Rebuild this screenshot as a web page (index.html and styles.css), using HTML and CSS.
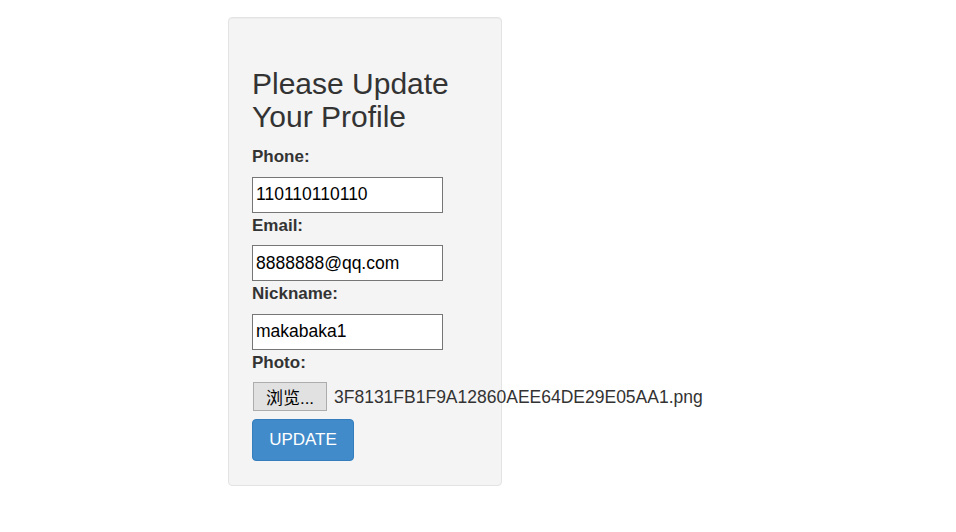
FILE: index.html
```html
<!DOCTYPE html>
<html>
<head>
    <meta charset="UTF-8">
    <meta name="viewport" content="width=device-width, initial-scale=1.0">
    <title>Update Profile</title>
    <link rel="stylesheet" href="styles.css">
</head>
<body>
    <div class="page">
        <form class="well" onsubmit="return false">
            <h2>Please Update Your Profile</h2>
            <label for="phone">Phone:</label>
            <input type="text" id="phone" value="110110110110">
            <label for="email">Email:</label>
            <input type="text" id="email" value="8888888@qq.com">
            <label for="nickname">Nickname:</label>
            <input type="text" id="nickname" value="makabaka1">
            <label>Photo:</label>
            <div class="file-row">
                <span class="file-btn">浏览...</span>
                <span class="file-name">3F8131FB1F9A12860AEE64DE29E05AA1.png</span>
            </div>
            <button class="btn-update" type="submit">UPDATE</button>
        </form>
    </div>
</body>
</html>
```

FILE: styles.css
```css
body {
    margin: 0;
    padding: 0;
    background-color: #fff;
    font-family: "Liberation Sans", Arial, "Noto Sans CJK SC", sans-serif;
    color: #333;
}
.page {
    padding: 17px 0 0 228px;
}
.well {
    width: 226px;
    padding: 23px 23px 24px;
    background-color: #f4f4f4;
    border: 1px solid #e3e3e3;
    border-radius: 4px;
    box-shadow: inset 0 1px 1px rgba(0,0,0,0.03);
}
.well h2 {
    margin: 26px 0 11px;
    font-size: 30px;
    font-weight: normal;
    line-height: 33px;
}
.well label {
    display: block;
    font-size: 17px;
    font-weight: bold;
    line-height: 25.5px;
    margin-bottom: 7px;
}
.well input {
    display: block;
    box-sizing: border-box;
    width: 191px;
    height: 36px;
    margin: 0;
    padding: 0 3px;
    border: 1px solid #767676;
    background: #fff;
    font-family: "Liberation Sans", Arial, sans-serif;
    font-size: 17.5px;
    color: #000;
}
.file-row {
    display: flex;
    align-items: center;
    gap: 7px;
    height: 29px;
    margin-top: 2px;
    white-space: nowrap;
}
.file-btn {
    flex-shrink: 0;
    box-sizing: border-box;
    height: 29px;
    width: 74px;
    margin-left: 1px;
    display: flex;
    align-items: center;
    justify-content: center;
    background: #e1e1e1;
    border: 1px solid #adadad;
    font-size: 17px;
    color: #000;
}
.file-name {
    padding-top: 2px;
    font-size: 17.5px;
    color: #333;
}
.btn-update {
    display: block;
    margin-top: 8px;
    width: 102px;
    height: 42px;
    padding: 0;
    background-color: #428bca;
    border: 1px solid #357ebd;
    border-radius: 4px;
    color: #fff;
    font-family: "Liberation Sans", Arial, sans-serif;
    font-size: 17px;
    cursor: pointer;
}
```
